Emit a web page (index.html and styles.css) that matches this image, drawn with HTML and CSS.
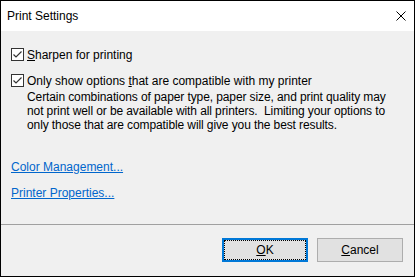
FILE: index.html
```html
<!DOCTYPE html>
<html lang="en">
<head>
    <meta charset="UTF-8">
    <title>Print Settings</title>
    <link rel="stylesheet" href="styles.css">
</head>
<body>
<div class="dialog">
    <div class="titlebar">
        <span class="title">Print Settings</span>
        <svg class="close" width="10" height="10" viewBox="0 0 10 10">
            <path d="M0.5 0.5 L9.5 9.5 M9.5 0.5 L0.5 9.5" stroke="#000" stroke-width="1" fill="none"/>
        </svg>
    </div>

    <div class="main">
        <label class="option">
            <span class="checkbox">
                <svg width="11" height="11" viewBox="0 0 11 11">
                    <path d="M1.5 5.5 L4 8 L9.5 2.5" stroke="#333" stroke-width="1.2" fill="none"/>
                </svg>
            </span>
            <span><u>S</u>harpen for printing</span>
        </label>

        <label class="option second">
            <span class="checkbox">
                <svg width="11" height="11" viewBox="0 0 11 11">
                    <path d="M1.5 5.5 L4 8 L9.5 2.5" stroke="#333" stroke-width="1.2" fill="none"/>
                </svg>
            </span>
            <span>Only show options <u>t</u>hat are compatible with my printer</span>
        </label>
        <p class="desc">Certain combinations of paper type, paper size, and print quality may<br>not print well or be available with all printers.&nbsp; Limiting your options to<br>only those that are compatible will give you the best results.</p>

        <div class="links">
            <a href="#">Color Management...</a>
            <a href="#">Printer Properties...</a>
        </div>
    </div>

    <div class="footer">
        <button class="btn default"><u>O</u>K</button>
        <button class="btn"><u>C</u>ancel</button>
    </div>
</div>
</body>
</html>
```

FILE: styles.css
```css
body {
    margin: 0;
    font-family: "Liberation Sans", Arial, sans-serif;
    font-size: 12px;
    color: #000;
}

.dialog {
    width: 415px;
    height: 277px;
    box-sizing: border-box;
    border: 1px solid #000;
    background: #f0f0f0;
    display: flex;
    flex-direction: column;
}

.titlebar {
    height: 30px;
    background: #fff;
    display: flex;
    align-items: center;
    justify-content: space-between;
    padding: 0 8px 0 6px;
}

.title {
    font-size: 12px;
}

.main {
    flex: 1;
    padding: 17px 0 0 10px;
}

.option {
    display: flex;
    align-items: center;
    gap: 3px;
    height: 13px;
}

.option.second {
    margin-top: 13px;
}

.checkbox {
    width: 13px;
    height: 13px;
    box-sizing: border-box;
    border: 1px solid #333;
    background: #fff;
    display: flex;
    align-items: center;
    justify-content: center;
}

.desc {
    margin: 3px 0 0 16px;
    line-height: 14px;
    white-space: nowrap;
    letter-spacing: -0.1px;
}

.links {
    margin-top: 28px;
    display: flex;
    flex-direction: column;
    align-items: flex-start;
    gap: 12px;
    line-height: 14px;
}

.links a {
    color: #0066cc;
}

.footer {
    border-top: 1px solid #a0a0a0;
    padding: 13px 11px 14px 0;
    display: flex;
    justify-content: flex-end;
    gap: 9px;
}

.btn {
    width: 86px;
    height: 24px;
    box-sizing: border-box;
    border: 1px solid #adadad;
    background: #e1e1e1;
    font-family: inherit;
    font-size: 12px;
    color: #000;
    padding: 0;
}

.btn.default {
    border: 2px solid #0078d7;
    outline: 1px dotted #000;
    outline-offset: -3px;
}
```
